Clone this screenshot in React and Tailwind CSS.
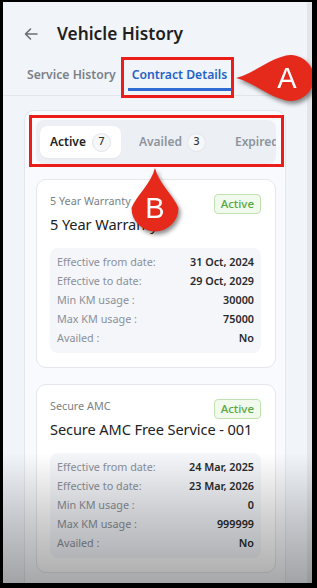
import React from "react";

const rows1 = [
  ["Effective from date:", "31 Oct, 2024"],
  ["Effective to date:", "29 Oct, 2029"],
  ["Min KM usage :", "30000"],
  ["Max KM usage :", "75000"],
  ["Availed :", "No"],
];
const rows2 = [
  ["Effective from date:", "24 Mar, 2025"],
  ["Effective to date:", "23 Mar, 2026"],
  ["Min KM usage :", "0"],
  ["Max KM usage :", "999999"],
  ["Availed :", "No"],
];

function Card({ label, title, rows }) {
  return (
    <div className="rounded-[10px] border border-[#e4e7ec] bg-white pl-[13px] pr-[14px] pt-[13px] pb-[14px]">
      <div className="flex items-start justify-between">
        <div className="min-w-0">
          <div className="text-[10.8px] leading-[16px] text-[#7a7f87]">{label}</div>
          <div className="mt-[4px] text-[14.6px] leading-[22px] text-[#222] whitespace-nowrap tracking-[-0.1px]">{title}</div>
        </div>
        <div className="mt-[1px] shrink-0 rounded-[4px] border border-[#bfe3b0] bg-[#f1faec] px-[6px] text-[11.5px] leading-[18px] font-medium text-[#55a845]">
          Active
        </div>
      </div>
      <div className="mt-[13px] rounded-[8px] bg-[#f4f6fa] px-[7px] py-[5px]">
        {rows.map(([k, v]) => (
          <div key={k} className="flex h-[19px] items-center justify-between text-[10.8px]">
            <span className="text-[#8b9099]">{k}</span>
            <span className="font-semibold text-[#2a2a2a]">{v}</span>
          </div>
        ))}
      </div>
    </div>
  );
}

export default function App() {
  return (
    <div className="relative h-[588px] w-[317px] bg-black pt-[2px] pl-[3px] pr-[5px] pb-[5px]" style={{ fontFamily: '"Noto Sans", "Open Sans", sans-serif' }}>
      <div className="relative flex h-full overflow-hidden bg-[#f1f4f9]">
        <div className="flex min-w-0 flex-1 flex-col">
          {/* header */}
          <div className="flex h-[24px] items-center gap-[19px] pl-[21px] mt-[20px]">
            <svg width="14" height="14" viewBox="0 0 14 14" fill="none" stroke="#6b6f76" strokeWidth="1.6" strokeLinecap="round" strokeLinejoin="round">
              <path d="M13 7H1.5M6.5 2L1.5 7l5 5" />
            </svg>
            <span className="text-[17.3px] font-semibold leading-[24px] text-[#1f1f1f]">Vehicle History</span>
          </div>
          {/* tabs */}
          <div className="mt-[20px] flex gap-[8px] border-b border-[#e2e6ec] pb-[4px] pl-[20px]">
            <div className="px-[4px] pb-[4px] pt-0 text-[12.2px] font-semibold leading-[18px] text-[#7b7f86] border-b-[3px] border-transparent">
              Service History
            </div>
            <div className="px-[4px] pb-[4px] text-[12.2px] font-semibold leading-[18px] text-[#2463c6] border-b-[3px] border-[#2f6bd0]">
              Contract Details
            </div>
          </div>
          {/* container */}
          <div className="mx-[21px] mt-[14px] flex flex-1 flex-col rounded-t-[10px] border border-b-0 border-[#e3e7ed] bg-[#f8fafd] pl-[11px] pr-[9px] pt-[9px]">
            <div className="flex h-[44px] items-center gap-[8px] overflow-hidden rounded-[8px] bg-[#eceff4] pl-[4px]">
              <div className="flex h-[32px] shrink-0 items-center gap-[6px] rounded-[8px] bg-white pl-[10px] pr-[10px] shadow-[0_1px_2px_rgba(0,0,0,0.04)]">
                <span className="text-[12px] font-semibold text-[#222]">Active</span>
                <span className="flex h-[19px] w-[19px] items-center justify-center rounded-full border border-[#e2e5ea] bg-[#f6f7f9] text-[10.5px] font-medium text-[#333]">7</span>
              </div>
              <div className="flex h-[32px] shrink-0 items-center gap-[5px] px-[10px]">
                <span className="text-[12px] font-semibold text-[#8e939b]">Availed</span>
                <span className="flex h-[19px] w-[19px] items-center justify-center rounded-full border border-[#e2e5ea] bg-[#f6f7f9] text-[10.5px] font-medium text-[#333]">3</span>
              </div>
              <div className="flex h-[32px] shrink-0 items-center gap-[6px] px-[11px]">
                <span className="text-[12px] font-semibold text-[#8e939b]">Expired</span>
              </div>
            </div>
            <div className="mt-[15px] flex flex-col gap-[16px]">
              <Card label="5 Year Warranty" title="5 Year Warranty" rows={rows1} />
              <Card label="Secure AMC" title="Secure AMC Free Service - 001" rows={rows2} />
            </div>
          </div>
        </div>
        {/* scrollbar */}
        <div className="w-[5px] shrink-0 bg-[#e3e5e8]" />

        {/* bottom fade overlay */}
        <div className="pointer-events-none absolute inset-x-0 bottom-0 h-[130px] bg-linear-to-b from-black/0 via-black/18 to-black/33" />

        {/* annotation A box */}
        <div className="absolute left-[118px] top-[55px] h-[41px] w-[113px] border-[3px] border-[#ea1d18]" />
        {/* annotation A callout */}
        <div className="absolute left-[228px] top-[50px] h-[52px] w-[82px] drop-shadow-[2px_3px_2px_rgba(0,0,0,0.45)]">
          <svg width="82" height="52" viewBox="0 0 82 52" className="absolute inset-0">
            <path d="M5 26 C 22 22, 36 8, 55 3.5 A 23 23 0 1 1 55 48.5 C 36 44, 22 30, 5 26 Z" fill="#e52a1c" />
          </svg>
          <span className="absolute left-[44px] top-[4px] w-[24px] text-center text-[29px] leading-[44px] text-white" style={{ fontFamily: '"Liberation Sans", Arial, sans-serif' }}>A</span>
        </div>

        {/* annotation B box */}
        <div className="absolute left-[26px] top-[113px] h-[52px] w-[255px] border-[3px] border-[#ea1d18]" />
        {/* annotation B callout */}
        <div className="absolute left-[127px] top-[164px] h-[72px] w-[52px] drop-shadow-[2px_3px_2px_rgba(0,0,0,0.45)]">
          <svg width="52" height="72" viewBox="0 0 52 72" className="absolute inset-0">
            <path d="M25 2 C 29 18, 44 30, 48.5 42 A 23.5 23.5 0 1 1 1.5 42 C 6 30, 21 18, 25 2 Z" fill="#e52a1c" />
          </svg>
          <span className="absolute left-0 top-[24px] w-[50px] text-center text-[29px] leading-[36px] text-white" style={{ fontFamily: '"Liberation Sans", Arial, sans-serif' }}>B</span>
        </div>
      </div>
    </div>
  );
}
